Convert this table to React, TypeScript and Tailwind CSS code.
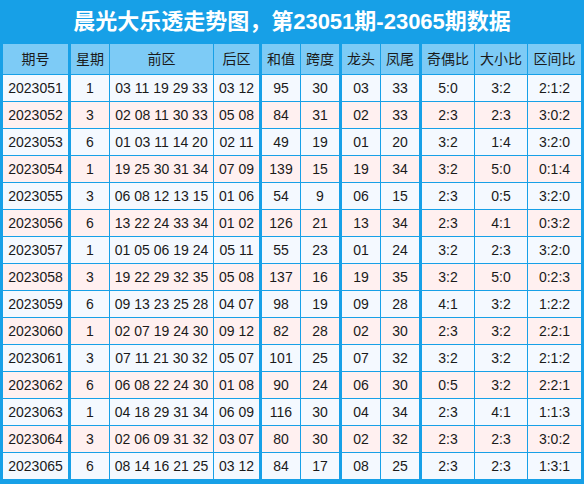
import React from "react";

const rows: string[][] = [
  ["2023051", "1", "03 11 19 29 33", "03 12", "95", "30", "03", "33", "5:0", "3:2", "2:1:2"],
  ["2023052", "3", "02 08 11 30 33", "05 08", "84", "31", "02", "33", "2:3", "2:3", "3:0:2"],
  ["2023053", "6", "01 03 11 14 20", "02 11", "49", "19", "01", "20", "3:2", "1:4", "3:2:0"],
  ["2023054", "1", "19 25 30 31 34", "07 09", "139", "15", "19", "34", "3:2", "5:0", "0:1:4"],
  ["2023055", "3", "06 08 12 13 15", "01 06", "54", "9", "06", "15", "2:3", "0:5", "3:2:0"],
  ["2023056", "6", "13 22 24 33 34", "01 02", "126", "21", "13", "34", "2:3", "4:1", "0:3:2"],
  ["2023057", "1", "01 05 06 19 24", "05 11", "55", "23", "01", "24", "3:2", "2:3", "3:2:0"],
  ["2023058", "3", "19 22 29 32 35", "05 08", "137", "16", "19", "35", "3:2", "5:0", "0:2:3"],
  ["2023059", "6", "09 13 23 25 28", "04 07", "98", "19", "09", "28", "4:1", "3:2", "1:2:2"],
  ["2023060", "1", "02 07 19 24 30", "09 12", "82", "28", "02", "30", "2:3", "3:2", "2:2:1"],
  ["2023061", "3", "07 11 21 30 32", "05 07", "101", "25", "07", "32", "3:2", "3:2", "2:1:2"],
  ["2023062", "6", "06 08 22 24 30", "01 08", "90", "24", "06", "30", "0:5", "3:2", "2:2:1"],
  ["2023063", "1", "04 18 29 31 34", "06 09", "116", "30", "04", "34", "2:3", "4:1", "1:1:3"],
  ["2023064", "3", "02 06 09 31 32", "03 07", "80", "30", "02", "32", "2:3", "2:3", "3:0:2"],
  ["2023065", "6", "08 14 16 21 25", "03 12", "84", "17", "08", "25", "2:3", "2:3", "1:3:1"],
];

const headers = ["期号", "星期", "前区", "后区", "和值", "跨度", "龙头", "凤尾", "奇偶比", "大小比", "区间比"];

// width + left margin class per column
const cols = [
  "w-[65px]",
  "w-[38px] ml-[3px]",
  "w-[103px] ml-[1px]",
  "w-[45px] ml-[1px]",
  "w-[38px] ml-[3px]",
  "w-[38px] ml-[1px]",
  "w-[38px] ml-[3px]",
  "w-[38px] ml-[1px]",
  "w-[52px] ml-[3px]",
  "w-[52px] ml-[1px]",
  "w-[53px] ml-[1px]",
];

export default function App() {
  return (
    <div
      className="w-[584px] h-[484px] bg-[#17a0e7] flex flex-col overflow-hidden"
      style={{ fontFamily: '"Liberation Sans", Arial, "Noto Sans CJK SC", sans-serif' }}
    >
      <div className="h-[44px] flex items-center justify-center text-white font-bold text-[22px] leading-none pb-[1px]">
        晨光大乐透走势图，第23051期-23065期数据
      </div>
      <div className="flex flex-col gap-[1px] px-[3px]">
        <div className="flex h-[30px]">
          {headers.map((h, i) => (
            <div
              key={i}
              className={`${cols[i]} shrink-0 bg-[#7dcbf6] flex items-center justify-center text-[14px] text-[#1a1a1a]`}
            >
              {h}
            </div>
          ))}
        </div>
        {rows.map((r, ri) => (
          <div key={ri} className="flex h-[26px]">
            {r.map((c, ci) => (
              <div
                key={ci}
                className={`${cols[ci]} shrink-0 ${
                  ri % 2 === 0 ? "bg-[#f4f9ff]" : "bg-[#fff0f0]"
                } flex items-center justify-center text-[14px] text-[#1a1a1a] whitespace-nowrap`}
              >
                {c}
              </div>
            ))}
          </div>
        ))}
      </div>
    </div>
  );
}
